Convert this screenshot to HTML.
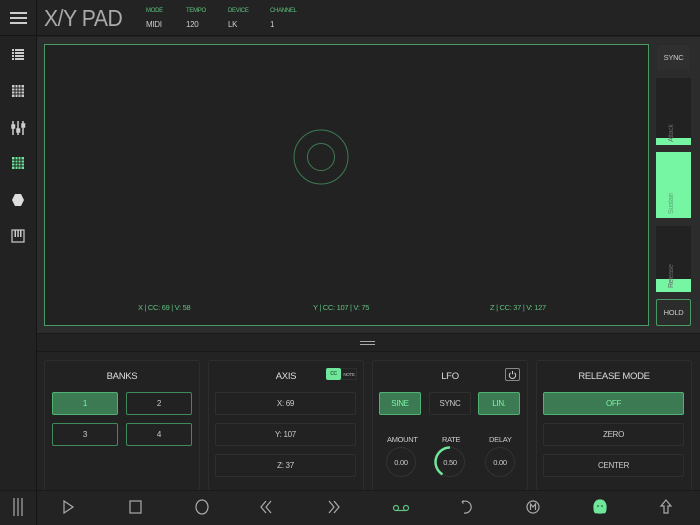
<!DOCTYPE html>
<html><head><meta charset="utf-8"><style>
*{box-sizing:border-box;margin:0;padding:0}
body{width:700px;height:525px;background:#222;overflow:hidden;position:relative;font-family:"Liberation Sans",sans-serif;color:#ccc;letter-spacing:-0.3px}
.a{position:absolute}
.c{display:flex;align-items:center;justify-content:center}
.btn{position:absolute;border:1px solid #2f2f2f;border-radius:2px;display:flex;align-items:center;justify-content:center;font-size:8px;color:#ccc}
.g{background:#3b7a52;border-color:#4fb272;color:#7cf5a5}
.go{border-color:#3f8a5a}
.panel{position:absolute;top:360px;height:132px;border:1px solid #2d2d2d;border-radius:3px;background:#222}
.pt{position:absolute;top:10px;left:0;right:0;text-align:center;font-size:9.5px;color:#ddd}
.lbl{font-size:6px;color:#5fc27f}
.knob{position:absolute;width:30px;height:30px;border-radius:50%;border:1.5px solid #333;display:flex;align-items:center;justify-content:center;font-size:7.5px;color:#ccc}
</style></head><body>
<div class="a" style="left:0;top:0;width:700px;height:36px;background:#232323;border-bottom:1px solid #151515"></div>
<div class="a" style="left:36px;top:0;width:1px;height:525px;background:#151515"></div>
<div class="a" style="left:10px;top:12px;width:17px;height:2px;background:#ccc;box-shadow:0 5px 0 #ccc,0 10px 0 #ccc"></div>
<div class="a" style="left:44px;top:5px;font-size:23px;color:#aaa;letter-spacing:-0.5px;transform:scaleX(0.92);transform-origin:left">X/Y PAD</div>
<div class="a lbl" style="left:146px;top:8px">MODE</div><div class="a" style="left:146px;top:20px;font-size:8px">MIDI</div>
<div class="a lbl" style="left:186px;top:8px">TEMPO</div><div class="a" style="left:186px;top:20px;font-size:8px">120</div>
<div class="a lbl" style="left:228px;top:8px">DEVICE</div><div class="a" style="left:228px;top:20px;font-size:8px">LK</div>
<div class="a lbl" style="left:270px;top:8px">CHANNEL</div><div class="a" style="left:270px;top:20px;font-size:8px">1</div>
<div class="a" style="left:0;top:37px;width:36px;height:453px;background:#222"></div>
<svg class="a" style="left:0;top:37px" width="36" height="220">
<g fill="#ccc"><rect x="12" y="12" width="2" height="2"/><rect x="12" y="15" width="2" height="2"/><rect x="12" y="18" width="2" height="2"/><rect x="12" y="21" width="2" height="2"/>
<rect x="15" y="12" width="9" height="2"/><rect x="15" y="15" width="9" height="2"/><rect x="15" y="18" width="9" height="2"/><rect x="15" y="21" width="9" height="2"/></g>
<g fill="#ccc"><rect x="12" y="48" width="12" height="12"/></g>
<g stroke="#222" stroke-width="1"><path d="M15 48v12M18 48v12M21 48v12M12 51h12M12 54h12M12 57h12"/></g>
<g stroke="#ccc" stroke-width="1.5" fill="#ccc"><path d="M13 84v14M18 84v14M23 84v14"/><rect x="12" y="88" width="2.5" height="3"/><rect x="17" y="92" width="2.5" height="3"/><rect x="22" y="87" width="2.5" height="3"/></g>
<rect x="12" y="120" width="12" height="12" fill="#6ee79a"/>
<g stroke="#222" stroke-width="1"><path d="M15 120v12M18 120v12M21 120v12M12 123h12M12 126h12M12 129h12"/></g>
<polygon points="15,157 21,157 24,163 21,169 15,169 12,163" fill="#ddd"/>
<rect x="12" y="193" width="12" height="12" fill="none" stroke="#ccc" stroke-width="1.2"/>
<g fill="#ccc"><rect x="14.5" y="193" width="1.5" height="7"/><rect x="17.3" y="193" width="1.5" height="7"/><rect x="20" y="193" width="1.5" height="7"/></g>
</svg>
<div class="a" style="left:37px;top:37px;width:663px;height:296px;background:#2c2c2c"></div>
<div class="a" style="left:44px;top:44px;width:605px;height:282px;background:#222;border:1px solid #4a9a66"></div>
<svg class="a" style="left:280px;top:116px" width="82" height="82"><circle cx="41" cy="41" r="27" fill="none" stroke="#3d7a52" stroke-width="1"/><circle cx="41" cy="41" r="13.5" fill="none" stroke="#3d7a52" stroke-width="1"/></svg>
<div class="a" style="left:138px;top:303px;font-size:7.5px;color:#5fc27f">X | CC: 69 | V: 58</div>
<div class="a" style="left:313px;top:303px;font-size:7.5px;color:#5fc27f">Y | CC: 107 | V: 75</div>
<div class="a" style="left:490px;top:303px;font-size:7.5px;color:#5fc27f">Z | CC: 37 | V: 127</div>
<div class="btn" style="left:656px;top:44px;width:35px;height:27px;background:#2f2f2f;border-color:#2a2a2a;font-size:7.5px">SYNC</div>
<div class="a" style="left:656px;top:78px;width:35px;height:67px;background:#222"></div>
<div class="a" style="left:656px;top:138px;width:35px;height:7px;background:#76f5a2"></div>
<div class="a" style="left:656px;top:152px;width:35px;height:66px;background:#76f5a2"></div>
<div class="a" style="left:656px;top:226px;width:35px;height:66px;background:#222"></div>
<div class="a" style="left:656px;top:279px;width:35px;height:13px;background:#76f5a2"></div>
<div class="a" style="left:668px;top:100px;width:12px;height:42px;writing-mode:vertical-rl;transform:rotate(180deg);font-size:7px;color:#666;text-align:left">Attack</div>
<div class="a" style="left:668px;top:172px;width:12px;height:42px;writing-mode:vertical-rl;transform:rotate(180deg);font-size:7px;color:#5aa878;text-align:left">Sustain</div>
<div class="a" style="left:668px;top:246px;width:12px;height:42px;writing-mode:vertical-rl;transform:rotate(180deg);font-size:7px;color:#666;text-align:left">Release</div>
<div class="btn" style="left:656px;top:299px;width:35px;height:27px;border-color:#4a9a66;background:#2c2c2c;font-size:7.5px">HOLD</div>
<div class="a" style="left:37px;top:333px;width:663px;height:19px;background:#222;border-top:1px solid #1a1a1a;border-bottom:1px solid #1a1a1a"></div>
<div class="a" style="left:360px;top:341px;width:15px;height:1px;background:#aaa;box-shadow:0 3px 0 #aaa"></div>
<div class="a" style="left:37px;top:352px;width:663px;height:138px;background:#232323"></div>
<div class="panel" style="left:44px;width:156px"><div class="pt">BANKS</div></div>
<div class="btn g" style="left:52px;top:392px;width:66px;height:23px">1</div>
<div class="btn go" style="left:126px;top:392px;width:66px;height:23px">2</div>
<div class="btn go" style="left:52px;top:423px;width:66px;height:23px">3</div>
<div class="btn go" style="left:126px;top:423px;width:66px;height:23px">4</div>
<div class="panel" style="left:208px;width:156px"><div class="pt">AXIS</div></div>
<div class="a c" style="left:326px;top:368px;width:15px;height:12px;background:#6ee79a;border-radius:2px;font-size:5px;color:#2c6b44;font-weight:bold">CC</div>
<div class="a c" style="left:341px;top:368px;width:16px;height:12px;font-size:4.5px;color:#bbb;border:1px solid #2e2e2e">NOTE</div>
<div class="btn" style="left:215px;top:392px;width:141px;height:23px">X: 69</div>
<div class="btn" style="left:215px;top:423px;width:141px;height:23px">Y: 107</div>
<div class="btn" style="left:215px;top:454px;width:141px;height:23px">Z: 37</div>
<div class="panel" style="left:372px;width:156px"><div class="pt">LFO</div></div>
<div class="a c" style="left:505px;top:368px;width:15px;height:13px;border:1px solid #888;border-radius:2px"><svg width="9" height="9"><path d="M2.5 2.8A3.2 3.2 0 1 0 6.5 2.8" fill="none" stroke="#ccc" stroke-width="1"/><path d="M4.5 1v3.2" stroke="#ccc" stroke-width="1"/></svg></div>
<div class="btn g" style="left:379px;top:392px;width:42px;height:23px">SINE</div>
<div class="btn" style="left:429px;top:392px;width:42px;height:23px">SYNC</div>
<div class="btn g" style="left:478px;top:392px;width:42px;height:23px">LIN.</div>
<div class="a" style="left:387px;top:435px;font-size:7.5px;color:#ccc">AMOUNT</div>
<div class="a" style="left:442px;top:435px;font-size:7.5px;color:#ccc">RATE</div>
<div class="a" style="left:489px;top:435px;font-size:7.5px;color:#ccc">DELAY</div>
<div class="knob" style="left:386px;top:447px">0.00</div>
<div class="knob" style="left:435px;top:447px">0.50</div>
<svg class="a" style="left:433px;top:445px" width="34" height="34"><path d="M17 2.5A14.5 14.5 0 0 0 9.5 29.4" fill="none" stroke="#6ee79a" stroke-width="2.5"/></svg>
<div class="knob" style="left:485px;top:447px">0.00</div>
<div class="panel" style="left:536px;width:156px"><div class="pt">RELEASE MODE</div></div>
<div class="btn g" style="left:543px;top:392px;width:141px;height:23px">OFF</div>
<div class="btn" style="left:543px;top:423px;width:141px;height:23px">ZERO</div>
<div class="btn" style="left:543px;top:454px;width:141px;height:23px">CENTER</div>
<div class="a" style="left:0;top:490px;width:700px;height:35px;background:#232323;border-top:1px solid #1a1a1a"></div>
<div class="a" style="left:36px;top:490px;width:1px;height:35px;background:#151515"></div>
<svg class="a" style="left:0;top:490px" width="700" height="35" fill="none" stroke="#aaa" stroke-width="1.2">
<path d="M14 8v18M18 8v18M22 8v18"/>
<path d="M64 11l9 6-9 6z"/>
<rect x="130" y="11" width="11" height="12"/>
<ellipse cx="202" cy="17" rx="6" ry="7"/>
<path d="M266 11l-5 6 5 6M271 11l-5 6 5 6"/>
<path d="M329 11l5 6-5 6M334 11l5 6-5 6"/>
<g stroke="#5fc27f"><circle cx="396" cy="18" r="2.5"/><circle cx="406" cy="18" r="2.5"/><path d="M396 20.5h10"/></g>
<path d="M462 12A6 6 0 1 1 464 23"/><path d="M462 12l1.5-1.5M462 12l1.5 1.5"/>
<circle cx="533" cy="17" r="6"/><path d="M530.5 20v-6l2.5 3 2.5-3v6"/>
<path d="M600 10c-4 0-6 3-6 7 0 4 1 6 2 6l1-1 1 1h4l1-1 1 1c1 0 2-2 2-6 0-4-2-7-6-7z" fill="#6ee79a" stroke="#6ee79a"/>
<circle cx="598" cy="16" r="0.8" fill="#232323" stroke="none"/><circle cx="602" cy="16" r="0.8" fill="#232323" stroke="none"/>
<path d="M666 10l-5 6h3v7h4v-7h3z"/>
</svg>
</body></html>
